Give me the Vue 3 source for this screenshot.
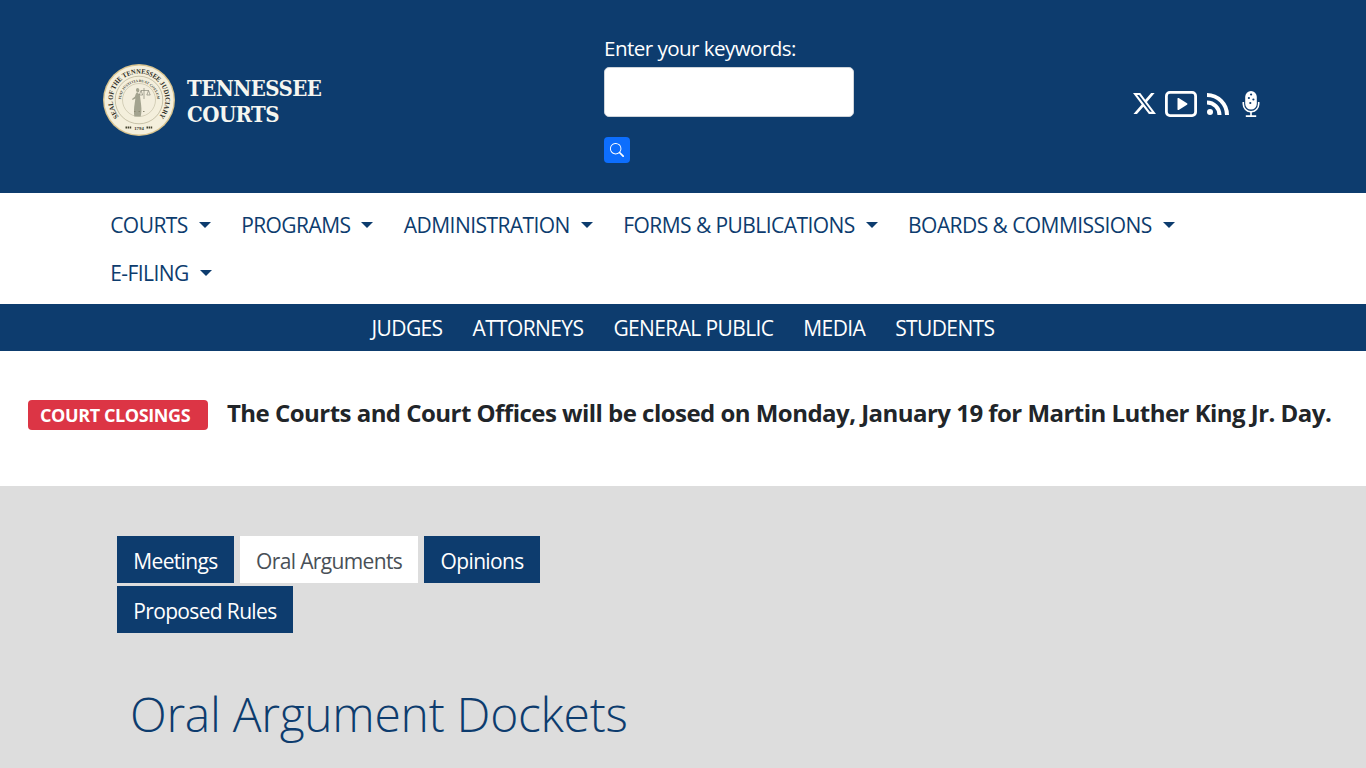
<template>
  <div class="page">
    <header class="masthead">
      <a class="brand">
        <svg class="seal" viewBox="0 0 72 72" width="72" height="72" role="img" aria-label="Seal of the Tennessee Judiciary">
          <defs>
            <path id="seal-top" d="M15.700 52.400A26.200 26.200 0 1 1 56.300 52.400" />
            <path id="seal-inner" d="M19.100 42.200A18 18 0 1 1 52.900 42.200" />
          </defs>
          <circle cx="36" cy="36" r="36" fill="#d9c48f" />
          <circle cx="36" cy="36" r="34.600" fill="#f4efdc" />
          <circle cx="36" cy="36" r="23.800" fill="none" stroke="#a9a385" stroke-width=".6" />
          <circle cx="36" cy="36" r="16.500" fill="#f3eedd" stroke="#b5af92" stroke-width=".5" />
          <text class="seal-text"><textPath href="#seal-top" startOffset="50%" text-anchor="middle" textLength="118" lengthAdjust="spacingAndGlyphs">SEAL OF THE TENNESSEE JUDICIARY</textPath></text>
          <text class="seal-small"><textPath href="#seal-inner" startOffset="50%" text-anchor="middle">FIAT JUSTITIA RUAT COELUM</textPath></text>
          <text class="seal-year" x="36" y="65.500" text-anchor="middle">1794</text>
          <path d="M34 24a2.400 2.400 0 1 1 .1 4.800c1.700.6 2.700 2 3 4l1 8c.6 5 .4 8.500-.4 11.700h-6.400c-.5-4-.4-8.500.3-12.500l.8-5.500-2.800 1.500-.6-.9 3-2.600c.5-2.200 1.100-3.500 2.300-4.400a2.400 2.400 0 0 1-.3-4.100z" fill="#a3a38f" />
          <path d="M41 24v11M38 26.500h7.500M38 26.500l-1.700 4.500h3.400zM45.500 26.500l-1.700 4.500h3.400z" fill="none" stroke="#77776a" stroke-width=".6" />
          <path d="M22.500 63.500h6M43.500 63.500h6" stroke="#45432f" stroke-width="1.800" stroke-dasharray="1.500 .6" />
          <path d="M31 47.500h1.500M35.500 47.500h1.500M40 47.500h1.500" stroke="#8b8872" stroke-width="1" />
        </svg>
        <span class="brand-name">TENNESSEE<br />COURTS</span>
      </a>

      <form class="search" @submit.prevent>
        <label for="keywords">Enter your keywords:</label>
        <input id="keywords" type="text" />
        <button type="submit" aria-label="Search">
          <svg viewBox="0 0 16 16" width="14" height="14" fill="currentColor">
            <path d="M11.742 10.344a6.500 6.500 0 1 0-1.397 1.398h-.001q.044.060.098.115l3.850 3.850a1 1 0 0 0 1.415-1.414l-3.850-3.850a1 1 0 0 0-.115-.100zM12 6.500a5.500 5.500 0 1 1-11 0 5.500 5.500 0 0 1 11 0" />
          </svg>
        </button>
      </form>

      <div class="social">
        <svg class="x-icon" viewBox="0 0 16 16" width="23" height="23" fill="currentColor">
          <path d="M12.600.75h2.454l-5.360 6.142L16 15.250h-4.937l-3.867-5.070-4.425 5.070H.316l5.733-6.570L0 .75h5.063l3.495 4.633L12.601.75Zm-.86 13.028h1.360L4.323 2.145H2.865z" />
        </svg>
        <svg viewBox="0 0 32 26" width="32" height="26" fill="currentColor">
          <rect x="1.400" y="1.400" width="29.200" height="23.200" rx="3.500" fill="none" stroke="currentColor" stroke-width="2.800" />
          <path d="M12.500 7.800v10.400a.8.800 0 0 0 1.200.7l8.300-5.200a.8.800 0 0 0 0-1.400l-8.300-5.200a.8.800 0 0 0-1.200.7z" />
        </svg>
        <svg class="rss" viewBox="0 0 24 24" width="24" height="24" fill="currentColor">
          <circle cx="4" cy="20" r="3" />
          <path d="M1 8.500v4a10.500 10.500 0 0 1 10.500 10.500h4A14.500 14.500 0 0 0 1 8.500z" />
          <path d="M1 1v4a18 18 0 0 1 18 18h4A22 22 0 0 0 1 1z" />
        </svg>
        <svg class="mic" viewBox="0 0 20 26" width="20" height="26" fill="currentColor">
          <path fill-rule="evenodd" d="M10 0a5.800 5.800 0 0 1 5.800 5.800v7a5.800 5.800 0 0 1-11.600 0v-7A5.800 5.800 0 0 1 10 0zM9 3.500a1.100 1.100 0 1 0 2.200 0 1.100 1.100 0 0 0-2.200 0zM6.800 7a1.100 1.100 0 1 0 2.200 0 1.100 1.100 0 0 0-2.200 0zm4.500 1.500a1.100 1.100 0 1 0 2.200 0 1.100 1.100 0 0 0-2.200 0zM8.200 12a1.100 1.100 0 1 0 2.200 0 1.100 1.100 0 0 0-2.200 0z" />
          <path d="M1.500 11h1.600v2a6.900 6.900 0 0 0 13.800 0v-2h1.600v2a8.500 8.500 0 0 1-7.700 8.400v2.800h4.400V26H4.800v-1.800h4.400v-2.800A8.500 8.500 0 0 1 1.500 13z" />
        </svg>
      </div>
    </header>

    <nav class="main-nav">
      <a v-for="item in mainNav" :key="item" class="main-link">{{ item }}<span class="caret"></span></a>
    </nav>

    <nav class="audience-nav">
      <a v-for="item in audiences" :key="item">{{ item }}</a>
    </nav>

    <section class="notice">
      <span class="badge">COURT CLOSINGS</span>
      <strong>The Courts and Court Offices will be closed on Monday, January 19 for Martin Luther King Jr. Day.</strong>
    </section>

    <main class="content">
      <div class="tabs">
        <a v-for="tab in tabs" :key="tab" class="tab" :class="{ active: tab === 'Oral Arguments' }">{{ tab }}</a>
      </div>
      <h1>Oral Argument Dockets</h1>
    </main>
  </div>
</template>

<script setup>
const mainNav = ['COURTS', 'PROGRAMS', 'ADMINISTRATION', 'FORMS & PUBLICATIONS', 'BOARDS & COMMISSIONS', 'E-FILING']
const audiences = ['JUDGES', 'ATTORNEYS', 'GENERAL PUBLIC', 'MEDIA', 'STUDENTS']
const tabs = ['Meetings', 'Oral Arguments', 'Opinions', 'Proposed Rules']
</script>

<style>
html, body {
  margin: 0;
  height: 768px;
  overflow: hidden;
  background: #ddd;
}
</style>

<style scoped>
.page {
  font-family: "Open Sans", "Noto Sans", sans-serif;
  color: #212529;
  letter-spacing: -0.56px;
}

.masthead {
  height: 193px;
  box-sizing: border-box;
  background: #0d3c6e;
  color: #fff;
  display: flex;
  padding-left: 103px;
}

.brand {
  width: 501px;
  height: 199px;
  display: flex;
  align-items: center;
  gap: 12px;
}

.seal {
  flex: none;
}

.seal-text {
  font: 700 7px "Liberation Serif", serif;
  fill: #2b2a22;
  letter-spacing: 0;
}

.seal-small {
  font: 700 3.700px "Liberation Serif", serif;
  fill: #4a4a3e;
  letter-spacing: 0;
}

.seal-year {
  font: 700 4.800px "Liberation Serif", serif;
  fill: #37352a;
  letter-spacing: 0;
}

.brand-name {
  font-family: "DejaVu Serif", "Liberation Serif", serif;
  font-stretch: condensed;
  font-weight: 700;
  font-size: 22px;
  line-height: 26px;
  letter-spacing: -0.55px;
  color: #f6f6f0;
  margin-top: 2px;
}

.search {
  width: 529px;
  display: flex;
  flex-direction: column;
  align-items: flex-start;
  padding-top: 36px;
  box-sizing: border-box;
}

.search label {
  font-size: 20.600px;
  line-height: 24px;
  margin-bottom: 7px;
}

.search input {
  width: 250px;
  height: 50px;
  box-sizing: border-box;
  border: 1px solid #ced4da;
  border-radius: 5px;
  background: #fff;
  margin: 0;
  padding: 0;
}

.search button {
  width: 26px;
  height: 26px;
  margin-top: 20px;
  padding: 0;
  border: 0;
  border-radius: 4px;
  background: #0d6efd;
  color: #fff;
  display: flex;
  align-items: center;
  justify-content: center;
}

.social {
  display: flex;
  align-items: center;
  gap: 8px;
  height: 207px;
}

.x-icon {
  margin-right: 1px;
}

.rss {
  margin-left: 1px;
}

.mic {
  margin-left: 3px;
}

.main-nav {
  height: 111px;
  box-sizing: border-box;
  background: #fff;
  padding: 8px 160px 0 95px;
  display: flex;
  flex-wrap: wrap;
  align-content: flex-start;
}

.main-link {
  height: 48px;
  padding: 0 15.200px;
  display: flex;
  align-items: center;
  font-size: 21px;
  color: #0d3c6e;
}

.caret {
  margin-left: 11px;
  border-top: 6px solid #0d3c6e;
  border-left: 6px solid transparent;
  border-right: 6px solid transparent;
}

.audience-nav {
  height: 47px;
  box-sizing: border-box;
  padding-top: 1px;
  background: #0d3c6e;
  display: flex;
  align-items: center;
  justify-content: center;
  gap: 30px;
  color: #fff;
  font-size: 21px;
  letter-spacing: -0.62px;
}

.notice {
  height: 135px;
  box-sizing: border-box;
  background: #fff;
  padding: 0 0 8px 28px;
  display: flex;
  align-items: center;
  gap: 19px;
  white-space: nowrap;
}

.notice strong {
  font-size: 24px;
  font-weight: 700;
  letter-spacing: -0.53px;
  margin-bottom: 4px;
}

.badge {
  width: 180px;
  height: 30px;
  box-sizing: border-box;
  padding-left: 12px;
  background: #dc3545;
  color: #fff;
  border-radius: 4px;
  font-size: 18px;
  font-weight: 700;
  letter-spacing: -0.4px;
  display: flex;
  align-items: center;
}

.content {
  background: #ddd;
  padding: 50px 0 0 117px;
}

.tabs {
  width: 460px;
  display: flex;
  flex-wrap: wrap;
  column-gap: 6px;
  row-gap: 3px;
}

.tab {
  height: 47px;
  box-sizing: border-box;
  padding: 2px 16.250px 0;
  display: flex;
  align-items: center;
  background: #0d3c6e;
  color: #fff;
  font-size: 21px;
  letter-spacing: -0.65px;
}

.tab.active {
  background: #fff;
  color: #495057;
}

h1 {
  margin: 49px 0 0 13px;
  font-size: 48px;
  line-height: 64px;
  font-weight: 300;
  color: #0d3c6e;
  letter-spacing: -0.28px;
}
</style>
